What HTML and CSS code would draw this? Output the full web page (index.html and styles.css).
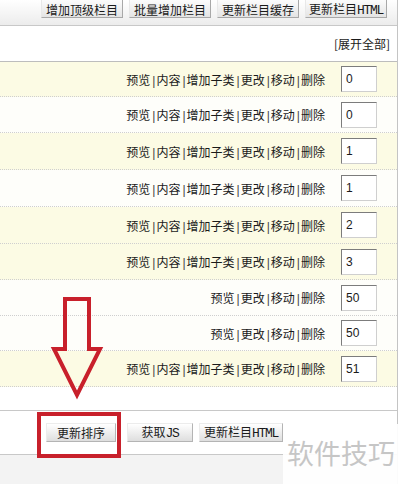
FILE: index.html
```html
<!DOCTYPE html>
<html lang="zh">
<head>
  <meta charset="UTF-8">
  <title>栏目管理</title>
  <link rel="stylesheet" href="styles.css">
</head>
<body>

  <div class="page">
    <!-- top toolbar -->
    <div class="toolbar">
      <button class="btn">增加顶级栏目</button>
      <button class="btn">批量增加栏目</button>
      <button class="btn">更新栏目缓存</button>
      <button class="btn">更新栏目<span class="en">HTML</span></button>
    </div>

    <div class="expand">[展开全部]</div>

    <!-- category rows -->
    <div class="list">
      <div class="row hl short">
        <span class="ops">预览<i>|</i>内容<i>|</i>增加子类<i>|</i>更改<i>|</i>移动<i>|</i>删除</span>
        <input class="order" type="text" value="0">
      </div>
      <div class="row">
        <span class="ops">预览<i>|</i>内容<i>|</i>增加子类<i>|</i>更改<i>|</i>移动<i>|</i>删除</span>
        <input class="order" type="text" value="0">
      </div>
      <div class="row hl tall">
        <span class="ops">预览<i>|</i>内容<i>|</i>增加子类<i>|</i>更改<i>|</i>移动<i>|</i>删除</span>
        <input class="order" type="text" value="1">
      </div>
      <div class="row tall">
        <span class="ops">预览<i>|</i>内容<i>|</i>增加子类<i>|</i>更改<i>|</i>移动<i>|</i>删除</span>
        <input class="order" type="text" value="1">
      </div>
      <div class="row hl tall">
        <span class="ops">预览<i>|</i>内容<i>|</i>增加子类<i>|</i>更改<i>|</i>移动<i>|</i>删除</span>
        <input class="order" type="text" value="2">
      </div>
      <div class="row hl">
        <span class="ops">预览<i>|</i>内容<i>|</i>增加子类<i>|</i>更改<i>|</i>移动<i>|</i>删除</span>
        <input class="order" type="text" value="3">
      </div>
      <div class="row">
        <span class="ops">预览<i>|</i>更改<i>|</i>移动<i>|</i>删除</span>
        <input class="order" type="text" value="50">
      </div>
      <div class="row short">
        <span class="ops">预览<i>|</i>更改<i>|</i>移动<i>|</i>删除</span>
        <input class="order" type="text" value="50">
      </div>
      <div class="row hl">
        <span class="ops">预览<i>|</i>内容<i>|</i>增加子类<i>|</i>更改<i>|</i>移动<i>|</i>删除</span>
        <input class="order" type="text" value="51">
      </div>
    </div>

    <div class="blank"></div>

    <!-- bottom buttons -->
    <div class="actions">
      <button class="btn2 sort">更新排序</button>
      <button class="btn2">获取<span class="en">JS</span></button>
      <button class="btn2">更新栏目<span class="en">HTML</span></button>
    </div>

    <div class="foot"></div>
  </div>

  <!-- annotation -->
  <svg class="arrow" width="60" height="110" viewBox="0 0 60 110">
    <polygon points="15,4 39,4 39,54 50,54 27,100 4,54 15,54" />
  </svg>
  <div class="redbox"></div>

  <div class="watermark">软件技巧</div>

</body>
</html>
```

FILE: styles.css
```css
body {
  margin: 0;
  background: #fff;
  font-family: "Noto Sans CJK SC", "Liberation Sans", sans-serif;
  font-size: 12px;
  color: #1a1a1a;
  height: 484px;
  overflow: hidden;
  position: relative;
}

.page {
  width: 397px;
  height: 484px;
  border-right: 1px solid #c4c4c4;
  display: flex;
  flex-direction: column;
}

.en {
  font-family: "Liberation Mono", monospace;
  font-size: 13px;
  letter-spacing: -1.3px;
}

/* toolbar */
.toolbar {
  height: 26px;
  box-sizing: border-box;
  border-bottom: 1px solid #c8c8c8;
  background: linear-gradient(#ffffff, #ececec);
  display: flex;
  justify-content: flex-end;
  align-items: flex-start;
  gap: 6px;
  padding-right: 10px;
}

.btn {
  width: 82px;
  height: 20px;
  margin-top: -2px;
  padding: 3px 0 0;
  font-family: inherit;
  font-size: 12px;
  line-height: 14px;
  color: #1a1a1a;
  background: linear-gradient(#fdfdfd, #e4e4e4);
  border: 1px solid #a8a8a8;
  border-top-color: #e8e8e8;
  border-left-color: #e8e8e8;
  flex-shrink: 0;
}

.expand {
  height: 35px;
  line-height: 35px;
  text-align: right;
  padding-right: 7px;
  border-bottom: 1px solid #bdbdbd;
  background: #fff;
}

/* rows */
.row {
  height: 36px;
  box-sizing: border-box;
  border-bottom: 1px dotted #cfcfcf;
  background: #fefefa;
  display: flex;
  justify-content: flex-end;
  align-items: center;
  padding-right: 20px;
}

.row.short {
  height: 35px;
}

.row.tall {
  height: 37px;
}

.row.hl {
  background: #fcfbe4;
}

.ops {
  margin-right: 16px;
  white-space: nowrap;
}

.ops i {
  font-style: normal;
  font-family: "Liberation Sans", sans-serif;
  margin: 0 1px 0 2px;
  color: #444;
}

.order {
  width: 36px;
  height: 26px;
  box-sizing: border-box;
  padding: 0 4px;
  font-family: "Liberation Sans", sans-serif;
  font-size: 12px;
  color: #1a1a1a;
  background: #fff;
  border: 1px solid #cfcfcf;
  border-top-color: #7c7c7c;
  border-left-color: #7c7c7c;
}

.blank {
  height: 23px;
  background: #fff;
}

/* bottom actions */
.actions {
  height: 43px;
  border-top: 1px solid #c8c8c8;
  border-bottom: 1px solid #c8c8c8;
  background: #fff;
  display: flex;
  align-items: center;
  padding-left: 46px;
}

.btn2 {
  height: 19px;
  padding: 0;
  width: 66px;
  margin-right: 6px;
  font-family: inherit;
  font-size: 12px;
  line-height: 16px;
  color: #1a1a1a;
  background: linear-gradient(#ffffff, #dedede);
  border: 1px solid #b4b4b4;
  border-top-color: #ececec;
  border-left-color: #ececec;
}

.btn2.sort {
  width: 70px;
  margin-right: 11px;
}

.btn2:last-child {
  width: 84px;
}

.foot {
  flex: 1;
  background: #f3f3f3;
}

/* annotation overlay */
.arrow {
  position: absolute;
  left: 50px;
  top: 295px;
}

.arrow polygon {
  fill: none;
  stroke: #c8202b;
  stroke-width: 4;
  stroke-linejoin: miter;
}

.redbox {
  position: absolute;
  left: 37px;
  top: 412px;
  width: 76px;
  height: 38px;
  border: 4px solid #c8202b;
}

.watermark {
  position: absolute;
  left: 283px;
  top: 424px;
  width: 121px;
  height: 60px;
  box-sizing: border-box;
  padding: 14px 0 0 4px;
  background: rgba(255, 255, 255, 0.92);
  color: #c6c6c6;
  font-size: 27px;
  line-height: 30px;
  white-space: nowrap;
}
```
